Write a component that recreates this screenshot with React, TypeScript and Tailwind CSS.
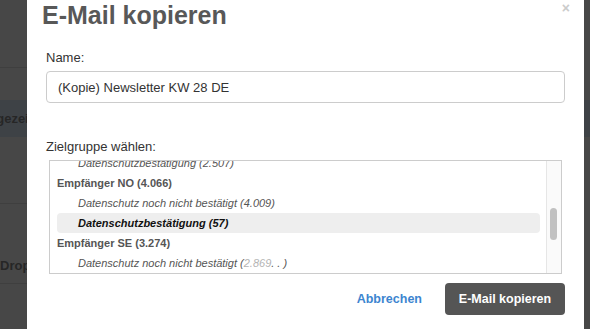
import React from "react";

const font = "font-['Liberation_Sans',Arial,sans-serif]";

type Row = { label: React.ReactNode; kind: "group" | "item" | "active" };

const rows: Row[] = [
  { label: "Datenschutzbestätigung (2.507)", kind: "item" },
  { label: "Empfänger NO (4.066)", kind: "group" },
  { label: "Datenschutz noch nicht bestätigt (4.009)", kind: "item" },
  { label: "Datenschutzbestätigung (57)", kind: "active" },
  { label: "Empfänger SE (3.274)", kind: "group" },
  {
    label: (
      <>
        Datenschutz noch nicht bestätigt (<span className="text-[#b4b4b4]">2.869</span> . . )
      </>
    ),
    kind: "item",
  },
];

function ListRow({ row }: { row: Row }) {
  if (row.kind === "group") {
    return (
      <div className="flex h-[20px] items-center text-[11px] font-bold text-[#555]">
        {row.label}
      </div>
    );
  }
  if (row.kind === "active") {
    return (
      <div className="flex h-[20px] items-center rounded-[4px] bg-[#eeeeee] pl-[21px] text-[11px] font-bold italic text-[#111]">
        {row.label}
      </div>
    );
  }
  return (
    <div className="flex h-[20px] items-center pl-[21px] text-[11px] italic text-[#555]">
      {row.label}
    </div>
  );
}

export default function App() {
  return (
    <div className={`flex h-[329px] w-[590px] overflow-hidden bg-[#474747] ${font}`}>
      {/* page behind the overlay */}
      <div className="flex w-[27px] shrink-0 flex-col text-[13px] font-bold text-[#262626]">
        <div className="h-[68px] border-b border-[#3f3f3f]" />
        <div className="h-[32px]" />
        <div className="flex h-[37px] items-center justify-end overflow-hidden bg-[#3e4246]">
          <span className="-mr-[14px] whitespace-nowrap">Angezeigt</span>
        </div>
        <div className="h-[67px] border-b border-[#3f3f3f]" />
        <div className="flex h-[80px] items-center overflow-hidden border-b border-[#3f3f3f]">
          <span className="whitespace-nowrap pt-[44px]">Dropdown</span>
        </div>
      </div>

      {/* modal */}
      <div className="relative w-[557px] shrink-0 bg-white px-[19px]">
        <button className="absolute right-[14px] top-[1px] text-[14px] font-bold leading-none text-[#cbcbcb]">
          ×
        </button>

        <h1 className="-ml-[4px] mt-[1px] h-[28px] text-[25px] font-bold leading-[28px] text-[#585858]">
          E-Mail kopieren
        </h1>

        <label className="mt-[20px] block h-[18px] text-[13px] leading-[18px] text-[#333]">
          Name:
        </label>
        <input
          defaultValue="(Kopie) Newsletter KW 28 DE"
          className="mt-[4px] h-[32px] w-full rounded-[4px] border border-[#cccccc] px-[11px] text-[13px] text-[#333] outline-none"
        />

        <label className="mt-[35px] block h-[18px] text-[13px] leading-[18px] text-[#333]">
          Zielgruppe wählen:
        </label>
        <div className="ml-[3px] mt-[4px] flex h-[114px] w-[513px] border border-[#cccccc]">
          <div className="flex-1 overflow-hidden pl-[7px] pr-[6px]">
            <div className="-mt-[8px]">
              {rows.map((row, i) => (
                <ListRow key={i} row={row} />
              ))}
            </div>
          </div>
          <div className="w-[15px] border-l border-[#e6e6e6] bg-[#fafafa] pl-[3px] pt-[47px]">
            <div className="h-[32px] w-[7px] rounded-full bg-[#c1c1c1]" />
          </div>
        </div>

        <div className="mt-[9px] flex items-center justify-end gap-[23px]">
          <button className="text-[12.5px] font-bold text-[#3d85d0]">Abbrechen</button>
          <button className="h-[32px] w-[120px] rounded-[4px] bg-[#555555] text-[12.5px] font-bold text-white">
            E-Mail kopieren
          </button>
        </div>
      </div>

      <div className="flex w-[6px] shrink-0 flex-col">
        <div className="h-[100px]" />
        <div className="h-[37px] bg-[#3e4246]" />
      </div>
    </div>
  );
}
